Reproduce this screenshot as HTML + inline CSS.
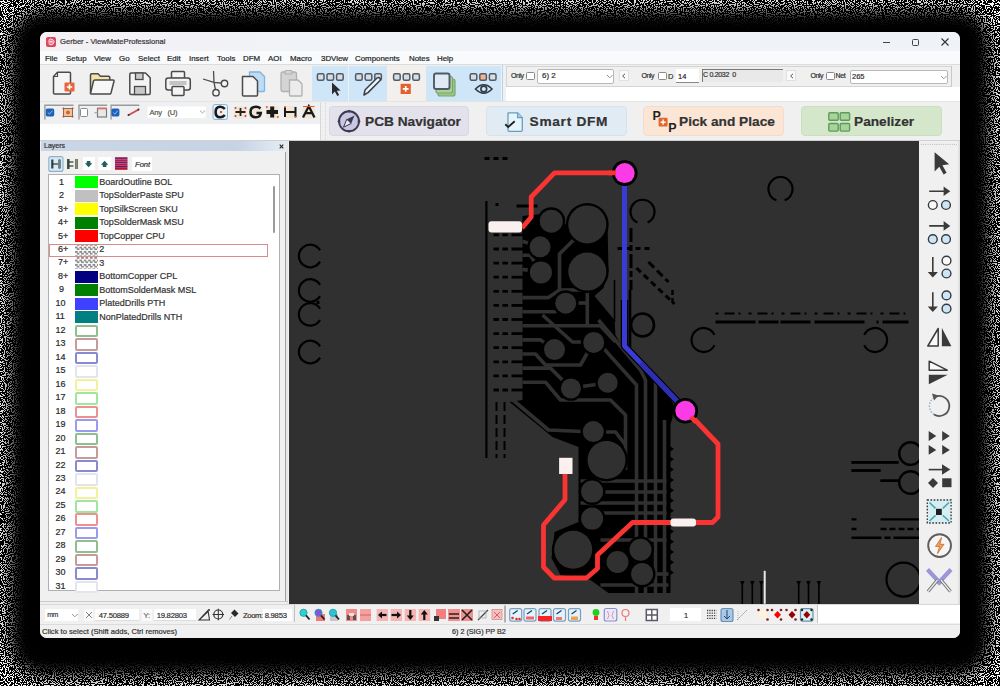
<!DOCTYPE html><html><head><meta charset="utf-8"><style>
html,body{margin:0;padding:0;}
body{width:1000px;height:686px;overflow:hidden;position:relative;background:#000;font-family:"Liberation Sans", sans-serif;}
.t{position:absolute;white-space:nowrap;line-height:1.2;-webkit-text-stroke:0.2px;}
.b{position:absolute;box-sizing:border-box;}
#sh{position:absolute;left:0;top:0;width:1000px;height:686px;}
#win{position:absolute;left:40px;top:32px;width:920px;height:606px;border-radius:7px;overflow:hidden;background:#f0f0f0;}
#in{position:absolute;left:-40px;top:-32px;width:1000px;height:686px;}
svg{position:absolute;overflow:visible;}
</style></head><body>
<svg style="left:0;top:0" width="1000" height="686">
<defs>
<filter id="spk" x="0" y="0" width="1000" height="686" filterUnits="userSpaceOnUse" color-interpolation-filters="sRGB">
<feTurbulence type="fractalNoise" baseFrequency="0.9" numOctaves="1" seed="11"/>
<feColorMatrix type="matrix" values="0 0 0 0 1  0 0 0 0 1  0 0 0 0 1  1 0 0 0 -0.035"/>
<feComponentTransfer><feFuncA type="discrete" tableValues="0 1"/></feComponentTransfer>
</filter>
<filter id="bl" x="-5%" y="-5%" width="110%" height="110%"><feGaussianBlur stdDeviation="8.0"/></filter>
<mask id="shm" maskUnits="userSpaceOnUse" x="0" y="0" width="1000" height="686">
<rect x="0" y="0" width="1000" height="686" fill="#fff"/>
<rect x="10" y="10" width="980" height="666" rx="34" fill="#000" filter="url(#bl)"/>
</mask>
</defs>
<rect x="0" y="0" width="1000" height="686" fill="#000"/>
<g mask="url(#shm)"><rect x="0" y="0" width="1000" height="686" fill="#fff" filter="url(#spk)"/></g>
</svg>
<div id="win"><div id="in">
<div class="b" style="left:40px;top:32px;width:920px;height:19px;background:linear-gradient(to right,#f4f0f4,#f0f3f7 30%,#eff3f7);"></div>
<div class="b" style="left:46px;top:37px;width:10px;height:10px;background:#d8475c;border-radius:2px;"></div>
<svg style="left:46px;top:37px" width="10" height="10"><circle cx="5" cy="5" r="3.3" fill="#ee7a8a"/><path d="M2.6 3.6 A2.8 2.8 0 1 1 3 6.8" fill="none" stroke="#fde" stroke-width="1"/><path d="M3.2 4.8 H6.6" stroke="#fff" stroke-width="1"/></svg>
<div class="t" style="left:60px;top:37.4px;font-size:7.6px;color:#333;font-weight:400;">Gerber - ViewMateProfessional</div>
<div class="b" style="left:883px;top:41.5px;width:7px;height:1.2000000000000028px;background:#444;"></div>
<div class="b" style="left:911.5px;top:38.5px;width:7.0px;height:7.0px;border:1.3px solid #444;border-radius:1.5px;"></div>
<svg style="left:941px;top:38px" width="8" height="8"><path d="M0.5 0.5 L7.5 7.5 M7.5 0.5 L0.5 7.5" stroke="#333" stroke-width="1.1"/></svg>
<div class="b" style="left:40px;top:51px;width:920px;height:13px;background:#f9fafb;"></div>
<div class="t" style="left:45px;top:53.8px;font-size:7.9px;color:#1e1e1e;font-weight:400;">File</div>
<div class="t" style="left:66px;top:53.8px;font-size:7.9px;color:#1e1e1e;font-weight:400;">Setup</div>
<div class="t" style="left:94px;top:53.8px;font-size:7.9px;color:#1e1e1e;font-weight:400;">View</div>
<div class="t" style="left:119px;top:53.8px;font-size:7.9px;color:#1e1e1e;font-weight:400;">Go</div>
<div class="t" style="left:138px;top:53.8px;font-size:7.9px;color:#1e1e1e;font-weight:400;">Select</div>
<div class="t" style="left:167px;top:53.8px;font-size:7.9px;color:#1e1e1e;font-weight:400;">Edit</div>
<div class="t" style="left:189px;top:53.8px;font-size:7.9px;color:#1e1e1e;font-weight:400;">Insert</div>
<div class="t" style="left:217px;top:53.8px;font-size:7.9px;color:#1e1e1e;font-weight:400;">Tools</div>
<div class="t" style="left:243px;top:53.8px;font-size:7.9px;color:#1e1e1e;font-weight:400;">DFM</div>
<div class="t" style="left:268px;top:53.8px;font-size:7.9px;color:#1e1e1e;font-weight:400;">AOI</div>
<div class="t" style="left:290px;top:53.8px;font-size:7.9px;color:#1e1e1e;font-weight:400;">Macro</div>
<div class="t" style="left:321px;top:53.8px;font-size:7.9px;color:#1e1e1e;font-weight:400;">3DView</div>
<div class="t" style="left:355px;top:53.8px;font-size:7.9px;color:#1e1e1e;font-weight:400;">Components</div>
<div class="t" style="left:409px;top:53.8px;font-size:7.9px;color:#1e1e1e;font-weight:400;">Notes</div>
<div class="t" style="left:437px;top:53.8px;font-size:7.9px;color:#1e1e1e;font-weight:400;">Help</div>
<div class="b" style="left:40px;top:64px;width:920px;height:1px;background:#dcdcdc;"></div>
<div class="b" style="left:40px;top:65px;width:920px;height:36px;background:#f0f0f0;"></div>
<div class="b" style="left:40px;top:101px;width:920px;height:1px;background:#e4e4e4;"></div>
<div class="b" style="left:40px;top:102px;width:285px;height:22px;background:#eef0f2;"></div>
<div class="b" style="left:40px;top:124px;width:281px;height:16px;background:#fff;"></div>
<div class="b" style="left:320px;top:102px;width:1px;height:38px;background:#d8d8d8;"></div>
<div class="b" style="left:325px;top:102px;width:635px;height:38px;background:#f0f0f0;"></div>
<div class="b" style="left:40px;top:140px;width:920px;height:1px;background:#d0d0d0;"></div>
<div class="b" style="left:311.8px;top:65.5px;width:36.599999999999966px;height:35px;background:#cfe5f8;"></div>
<div class="b" style="left:348.8px;top:65.5px;width:38.0px;height:35px;background:#cfe5f8;"></div>
<div class="b" style="left:387px;top:65.5px;width:38px;height:35px;background:#f3efec;"></div>
<div class="b" style="left:425.5px;top:65.5px;width:37.5px;height:35px;background:#cfe5f8;"></div>
<div class="b" style="left:463.4px;top:65.5px;width:37.60000000000002px;height:35px;background:#cfe5f8;"></div>
<svg style="left:40px;top:64px" width="470" height="40" viewBox="40 64 470 40"><path d="M57.5 72.2 H69.5 Q70.5 72.2 70.5 73.2 V93 Q70.5 94 69.5 94 H54.5 Q53.5 94 53.5 93 V76.5 Z" fill="#f4f4f4" stroke="#4a4a4a" stroke-width="1.5" stroke-linejoin="round"/><path d="M57.5 72.2 V76.5 H53.5" fill="none" stroke="#4a4a4a" stroke-width="1.2"/><rect x="64.5" y="82.4" width="10" height="9" rx="1" fill="#e8643c"/><path d="M69.5 84.3 V89.6 M66.8 87 H72.2" stroke="#fff" stroke-width="1.6"/><path d="M90.5 93.5 V75 Q90.5 73.8 91.7 73.8 H98 L100.5 76.3 H108.5 Q109.8 76.3 109.8 77.5 V80" fill="#f3e3a8" stroke="#4a4a4a" stroke-width="1.5" stroke-linejoin="round"/><path d="M90.5 93.5 L93.5 81 Q93.8 80 94.8 80 H113 Q114.3 80 114 81.2 L111 93 Q110.7 94 109.7 94 H91 Z" fill="#f7f7f7" stroke="#4a4a4a" stroke-width="1.5" stroke-linejoin="round"/><path d="M131 73 H145.5 L150.2 77.7 V93.2 Q150.2 94.4 149 94.4 H131 Q129.8 94.4 129.8 93.2 V74.2 Q129.8 73 131 73 Z" fill="#f4f4f4" stroke="#4a4a4a" stroke-width="1.5" stroke-linejoin="round"/><rect x="135.5" y="73" width="7.5" height="6.5" fill="#c8c8c8" stroke="#4a4a4a" stroke-width="1.3"/><rect x="134.5" y="86.5" width="11" height="8" fill="#c8c8c8" stroke="#4a4a4a" stroke-width="1.3"/><rect x="171.5" y="71.5" width="13" height="7" rx="1" fill="#f4f4f4" stroke="#4a4a4a" stroke-width="1.5"/><rect x="165.8" y="78" width="24.5" height="12" rx="2.5" fill="#f4f4f4" stroke="#4a4a4a" stroke-width="1.5"/><rect x="169.5" y="81" width="17" height="4" fill="#c4c4c4"/><rect x="172" y="86.5" width="12" height="9" rx="1" fill="#f4f4f4" stroke="#4a4a4a" stroke-width="1.5"/><path d="M203 79 L214 82.3 L225 83.5 M213.5 71 L214 82.3 L216 92.5" fill="none" stroke="#4a4a4a" stroke-width="1.3"/><circle cx="224.5" cy="83.5" r="3.2" fill="#f4f4f4" stroke="#4a4a4a" stroke-width="1.4"/><circle cx="216" cy="92.7" r="3.2" fill="#f4f4f4" stroke="#4a4a4a" stroke-width="1.4"/><path d="M249.5 72 H260 L264.5 76.5 V90.5 Q264.5 91.5 263.5 91.5 H250.5 Q249.5 91.5 249.5 90.5 Z" fill="#bfdcf5" stroke="#7fb3e0" stroke-width="1.3" stroke-linejoin="round"/><path d="M242.5 76.5 H253 L257.5 81 V95 Q257.5 96 256.5 96 H243.5 Q242.5 96 242.5 95 Z" fill="#f4f4f4" stroke="#4a4a4a" stroke-width="1.5" stroke-linejoin="round"/><rect x="281" y="72" width="15.5" height="19.5" rx="2" fill="#d4d4d4" stroke="#b0b0b0" stroke-width="1.3"/><rect x="285" y="70.5" width="7" height="3.5" rx="1" fill="#d4d4d4" stroke="#b0b0b0" stroke-width="1.2"/><path d="M289.5 80 H298 L302 84 V95 Q302 96 301 96 H290.5 Q289.5 96 289.5 95 Z" fill="#ececec" stroke="#b0b0b0" stroke-width="1.3"/><rect x="317.4" y="73.8" width="6.6" height="6.4" rx="1.5" fill="#d8dde2" stroke="#505a66" stroke-width="1.5"/><rect x="327.0" y="73.8" width="6.6" height="6.4" rx="1.5" fill="#d8dde2" stroke="#505a66" stroke-width="1.5"/><rect x="336.59999999999997" y="73.8" width="6.6" height="6.4" rx="1.5" fill="#d8dde2" stroke="#505a66" stroke-width="1.5"/><path d="M332 82.6 L332 94.5 L334.8 91.6 L337.3 96 L339.2 95 L336.8 90.8 L340.6 90.5 Z" fill="#2a2a2a"/><rect x="355.6" y="73.8" width="6.6" height="6.4" rx="1.5" fill="#d8dde2" stroke="#505a66" stroke-width="1.5"/><rect x="365.20000000000005" y="73.8" width="6.6" height="6.4" rx="1.5" fill="#d8dde2" stroke="#505a66" stroke-width="1.5"/><rect x="374.8" y="73.8" width="6.6" height="6.4" rx="1.5" fill="#d8dde2" stroke="#505a66" stroke-width="1.5"/><path d="M364 95 L365 90 L377 78 Q378.5 76.8 379.8 78.1 Q381 79.4 379.8 80.8 L368 92.6 Z" fill="#eef5fb" stroke="#3a3f46" stroke-width="1.5" stroke-linejoin="round"/><rect x="393.6" y="73.8" width="6.6" height="6.4" rx="1.5" fill="#d8dde2" stroke="#505a66" stroke-width="1.5"/><rect x="403.20000000000005" y="73.8" width="6.6" height="6.4" rx="1.5" fill="#d8dde2" stroke="#505a66" stroke-width="1.5"/><rect x="412.8" y="73.8" width="6.6" height="6.4" rx="1.5" fill="#d8dde2" stroke="#505a66" stroke-width="1.5"/><rect x="400.6" y="83.8" width="10.2" height="10.2" fill="#e3602e"/><path d="M405.7 86 V91.8 M402.8 88.9 H408.6" stroke="#fff" stroke-width="1.7"/><rect x="438" y="79" width="17" height="17" rx="2" fill="#9cc68a" stroke="#78a868" stroke-width="1.2"/><rect x="436" y="76.5" width="16.5" height="16.5" rx="2" fill="#a9d098" stroke="#78a868" stroke-width="1.2"/><rect x="434" y="73.5" width="15.5" height="15.5" rx="2" fill="#dfeaf4" stroke="#4f5a66" stroke-width="1.9"/><rect x="470.2" y="73.8" width="6.6" height="6.4" rx="1.5" fill="#d8dde2" stroke="#505a66" stroke-width="1.5"/><rect x="479.8" y="73.8" width="6.6" height="6.4" rx="1.5" fill="#f2b48a" stroke="#505a66" stroke-width="1.5"/><rect x="489.4" y="73.8" width="6.6" height="6.4" rx="1.5" fill="#d8dde2" stroke="#505a66" stroke-width="1.5"/><path d="M475.5 89 Q483.8 80.5 492 89 Q483.8 97.5 475.5 89 Z" fill="none" stroke="#2f3a44" stroke-width="1.6"/><circle cx="483.8" cy="89" r="2.9" fill="none" stroke="#2f3a44" stroke-width="1.6"/></svg>
<svg style="left:40px;top:100px" width="290" height="28" viewBox="40 100 290 28"><path d="M44.900000000000006 119.4 V105.2 H73.6" fill="none" stroke="#9a9a9a" stroke-width="1.4"/><path d="M79.0 119.4 V105.2 H107.2" fill="none" stroke="#9a9a9a" stroke-width="1.4"/><path d="M111.10000000000001 119.4 V105.2 H139.3" fill="none" stroke="#9a9a9a" stroke-width="1.4"/><rect x="45.8" y="108.4" width="8.4" height="8" rx="1.6" fill="#1d62b8"/><path d="M47.8 112.5 L49.5 114.2 L52.4 110.6" fill="none" stroke="#9cc4f0" stroke-width="0.9"/><rect x="63.5" y="108.5" width="9" height="8" rx="1" fill="#e9c79a" stroke="#8a6a48" stroke-width="1"/><circle cx="68" cy="112.5" r="2" fill="#e06030"/><circle cx="63.5" cy="108.5" r="1" fill="#c33"/><circle cx="72.5" cy="108.5" r="1" fill="#c33"/><circle cx="63.5" cy="116.5" r="1" fill="#c33"/><circle cx="72.5" cy="116.5" r="1" fill="#c33"/><rect x="80.5" y="108.5" width="7" height="8" rx="1" fill="#fff" stroke="#8a8a8a" stroke-width="1"/><rect x="97.5" y="108.5" width="9" height="8.5" fill="#e8e8e8" stroke="#7a7a7a" stroke-width="1.2"/><rect x="97.5" y="107.5" width="9" height="1.8" fill="#e07070"/><rect x="94.5" y="112" width="3" height="1.4" fill="#aaa"/><rect x="111.4" y="108.4" width="8" height="8" rx="1.6" fill="#1d62b8"/><path d="M113.3 112.5 L115 114.2 L117.7 110.6" fill="none" stroke="#9cc4f0" stroke-width="0.9"/><path d="M128.3 115.2 L138.7 109.5" stroke="#d04848" stroke-width="1.8"/><circle cx="128.5" cy="115" r="1" fill="#333"/><circle cx="138.5" cy="109.6" r="1" fill="#333"/><rect x="147.6" y="106.5" width="58" height="11.5" fill="#fff"/><path d="M200 110.6 L202.5 113 L205 110.6" fill="none" stroke="#999" stroke-width="0.9"/><rect x="213" y="104.5" width="14.5" height="15" rx="2" fill="#eaf2fa" stroke="#8db4d8" stroke-width="1"/><path d="M224.8 109 Q223 106.8 220.2 106.8 Q215.6 106.8 215.6 112 Q215.6 117.3 220.2 117.3 Q223 117.3 224.8 115" fill="none" stroke="#1a1a1a" stroke-width="2.6"/><circle cx="221" cy="112" r="1.2" fill="#e05a20"/><rect x="234" y="106" width="12.5" height="12.5" rx="2" fill="#f4e4cc" opacity="0.8"/><rect x="249" y="106" width="12.5" height="12.5" rx="2" fill="#f4e4cc" opacity="0.8"/><rect x="266" y="106" width="12.5" height="12.5" rx="2" fill="#f4e4cc" opacity="0.8"/><rect x="284.4" y="106" width="12.5" height="12.5" rx="2" fill="#f4e4cc" opacity="0.8"/><rect x="302.5" y="106" width="12.5" height="12.5" rx="2" fill="#f4e4cc" opacity="0.8"/><path d="M235.5 112 H245.5 M240.5 108 V116" stroke="#222" stroke-width="1.8"/><circle cx="235.5" cy="108" r="1" fill="#d33"/><circle cx="245.5" cy="108" r="1" fill="#d33"/><circle cx="235.5" cy="116" r="1" fill="#d33"/><circle cx="245.5" cy="116" r="1" fill="#d33"/><path d="M260.5 108.5 Q258.8 106.8 256 106.8 Q250.5 106.8 250.5 112 Q250.5 117.3 256 117.3 Q260.5 117.3 260.8 113 H256.5" fill="none" stroke="#1a1a1a" stroke-width="2.5"/><path d="M266.5 112 H278 M272.2 106.5 V117.5" stroke="#1a1a1a" stroke-width="4"/><circle cx="266.8" cy="107" r="1" fill="#e06020"/><circle cx="277.8" cy="117" r="1" fill="#e06020"/><path d="M285 107 V117 M295.5 107 V117 M285 112 H295.5" stroke="#1a1a1a" stroke-width="2"/><circle cx="285" cy="107" r="1" fill="#e06020"/><circle cx="295.5" cy="117" r="1" fill="#e06020"/><path d="M303 117.5 L308.8 106.2 L314.5 117.5 M305.3 113.2 H312.3" fill="none" stroke="#1a1a1a" stroke-width="2.3"/><path d="M303 106.5 H314.5" stroke="#e06020" stroke-width="1"/></svg>
<div class="t" style="left:149.5px;top:108.0px;font-size:7.5px;color:#555;font-weight:400;letter-spacing:-0.2px;">Any&nbsp;&nbsp;&nbsp;(U)</div>
<div class="b" style="left:325px;top:103px;width:0;height:37px;border-left:1px dotted #d4d4d4;"></div>
<div class="b" style="left:501.5px;top:65px;width:1.6px;height:36px;background:#b4d4f0;"></div>
<div class="b" style="left:505.5px;top:66px;width:446px;height:20.5px;background:#f0f0f0;border:1px solid #d4d4d4;border-right-color:#c8c8c8;"></div>
<div class="b" style="left:505.5px;top:86.5px;width:455px;height:14.5px;background:#fff;"></div>
<div class="t" style="left:511px;top:71.7px;font-size:7px;color:#333;font-weight:400;letter-spacing:-0.5px;">Only</div>
<div class="b" style="left:526px;top:71.8px;width:8.5px;height:8px;border:1px solid #8a8a8a;border-radius:1.5px;background:#fff;"></div>
<div class="b" style="left:536.8px;top:68.5px;width:77.6px;height:15px;background:#fff;border:1px solid #b8b8b8;border-radius:2px;"></div>
<div class="t" style="left:542px;top:71.4px;font-size:8px;color:#333;font-weight:400;">6) 2</div>
<svg style="left:606px;top:74px" width="8" height="5"><path d="M1 1 L3.8 3.8 L6.6 1" fill="none" stroke="#888" stroke-width="0.9"/></svg>
<div class="b" style="left:618.5px;top:70px;width:10px;height:11px;background:#fafafa;border:1px solid #e0e0e0;"></div>
<svg style="left:620px;top:72px" width="8" height="8"><path d="M5 1.8 L2.6 4 L5 6.2" fill="none" stroke="#555" stroke-width="1"/></svg>
<div class="t" style="left:641.5px;top:71.7px;font-size:7px;color:#333;font-weight:400;letter-spacing:-0.5px;">Only</div>
<div class="b" style="left:658px;top:71.8px;width:8.5px;height:8px;border:1px solid #8a8a8a;border-radius:1.5px;background:#fff;"></div>
<div class="t" style="left:668px;top:71.5px;font-size:7.5px;color:#333;font-weight:400;">D</div>
<div class="b" style="left:676px;top:69px;width:23px;height:13.5px;background:#fff;border-bottom:1px solid #888;"></div>
<div class="t" style="left:678px;top:71.5px;font-size:7.5px;color:#222;font-weight:400;">14</div>
<div class="b" style="left:701.5px;top:68.5px;width:81.5px;height:13px;background:#e9e9e9;border-top:1.5px solid #777;border-left:1px solid #777;"></div>
<div class="t" style="left:703px;top:71.3px;font-size:7px;color:#333;font-weight:400;letter-spacing:-0.3px;">C 0.2032&nbsp; 0</div>
<div class="b" style="left:786px;top:70px;width:10px;height:11px;background:#fafafa;border:1px solid #e0e0e0;"></div>
<svg style="left:787.5px;top:72px" width="8" height="8"><path d="M5 1.8 L2.6 4 L5 6.2" fill="none" stroke="#555" stroke-width="1"/></svg>
<div class="t" style="left:810.5px;top:71.7px;font-size:7px;color:#333;font-weight:400;letter-spacing:-0.5px;">Only</div>
<div class="b" style="left:826px;top:71.8px;width:8.5px;height:8px;border:1px solid #8a8a8a;border-radius:1.5px;background:#fff;"></div>
<div class="t" style="left:835.5px;top:71.8px;font-size:7px;color:#333;font-weight:400;letter-spacing:-0.3px;">Net</div>
<div class="b" style="left:849.5px;top:70px;width:98.5px;height:14px;background:#fff;border:1px solid #b8b8b8;border-radius:2px;"></div>
<div class="t" style="left:852px;top:72.1px;font-size:7.5px;color:#333;font-weight:400;">265</div>
<svg style="left:940px;top:75px" width="8" height="5"><path d="M1 1 L3.8 3.8 L6.6 1" fill="none" stroke="#888" stroke-width="0.9"/></svg>
<div class="b" style="left:328.5px;top:106.4px;width:140.5px;height:30px;background:#e3e1eb;border-radius:4px;border:1px solid #d9d7e2;"></div>
<div class="t" style="left:365px;top:113.6px;font-size:13.7px;color:#333;font-weight:700;">PCB Navigator</div>
<div class="b" style="left:486px;top:106.4px;width:141px;height:30px;background:#e0ebf4;border-radius:4px;border:1px solid #d6e2ec;"></div>
<div class="t" style="left:529.6px;top:113.6px;font-size:13.7px;color:#333;font-weight:700;letter-spacing:0.7px;">Smart DFM</div>
<div class="b" style="left:643px;top:106.4px;width:140.5px;height:30px;background:#fbe5d5;border-radius:4px;border:1px solid #f1dccd;"></div>
<div class="t" style="left:679px;top:113.6px;font-size:13.7px;color:#333;font-weight:700;">Pick and Place</div>
<div class="b" style="left:800.5px;top:106.4px;width:141.5px;height:30px;background:#d5e7cb;border-radius:4px;border:1px solid #cadfbf;"></div>
<div class="t" style="left:854px;top:113.6px;font-size:13.7px;color:#333;font-weight:700;">Panelizer</div>
<svg style="left:320px;top:100px" width="640" height="40" viewBox="320 100 640 40"><circle cx="349" cy="121.3" r="10" fill="#c9c6e6" stroke="#3b3b4c" stroke-width="1.9"/><path d="M354.5 115.5 L351.2 123.5 L343.5 127.2 L346.8 119.2 Z" fill="#3b3b4c"/><path d="M346.8 119.2 L343.5 127.2 L351.2 123.5 Z" fill="#fff" opacity="0.9"/><path d="M346.8 119.2 L351.2 123.5 L343.5 127.2 Z" fill="none" stroke="#3b3b4c" stroke-width="1"/><circle cx="359.0" cy="121.3" r="1.3" fill="#3b3b4c"/><circle cx="349.0" cy="131.3" r="1.3" fill="#3b3b4c"/><circle cx="339.0" cy="121.3" r="1.3" fill="#3b3b4c"/><circle cx="349.0" cy="111.3" r="1.3" fill="#3b3b4c"/><path d="M508 112.8 H517.5 L522.3 117.6 V130 Q522.3 131.3 521 131.3 H509.3 Q508 131.3 508 130 V114.1 Q508 112.8 509.3 112.8 Z" fill="#e6f5fc" stroke="#6b9cbc" stroke-width="1.3" stroke-linejoin="round"/><path d="M517.5 112.8 V117.6 H522.3" fill="#9fd0ee" stroke="#6b9cbc" stroke-width="1.1"/><path d="M505.3 124.3 L508.2 127 L514.7 121.3" fill="none" stroke="#222" stroke-width="1.9"/><text x="652.5" y="120.3" font-family="Liberation Sans" font-weight="700" font-size="12.5" fill="#222">P</text><rect x="658.6" y="117.8" width="9" height="8.7" rx="1" fill="#e0682e"/><path d="M663.1 119.6 V124.7 M660.6 122.2 H665.6" stroke="#fff" stroke-width="1.4"/><text x="668.3" y="132.3" font-family="Liberation Sans" font-weight="700" font-size="12.5" fill="#222">P</text><rect x="828.8000000000001" y="112.69999999999999" width="9.4" height="7.6" rx="1" fill="#a8d39b" stroke="#5f9a5c" stroke-width="1.4"/><rect x="828.8000000000001" y="123.5" width="9.4" height="7.6" rx="1" fill="#a8d39b" stroke="#5f9a5c" stroke-width="1.4"/><rect x="840.2" y="112.69999999999999" width="9.4" height="7.6" rx="1" fill="#a8d39b" stroke="#5f9a5c" stroke-width="1.4"/><rect x="840.2" y="123.5" width="9.4" height="7.6" rx="1" fill="#a8d39b" stroke="#5f9a5c" stroke-width="1.4"/></svg>
<div class="b" style="left:288.5px;top:141px;width:630.5px;height:462.5px;background:#303030;"></div>
<div class="b" style="left:288.5px;top:141px;width:630.5px;height:462.5px;overflow:hidden;">
<svg width="630.5" height="462.5" viewBox="288.5 141 630.5 462.5" style="left:0;top:0">
<path d="M319.5 261.6 A11.3 11.3 0 1 1 319.5 250.3" fill="none" stroke="#000" stroke-width="2.2"/>
<path d="M319.5 296.1 A11.3 11.3 0 1 1 319.5 284.9" fill="none" stroke="#000" stroke-width="2.2"/>
<path d="M319.5 320.0 A11.3 11.3 0 1 1 319.5 308.8" fill="none" stroke="#000" stroke-width="2.2"/>
<path d="M319.5 357.6 A11.3 11.3 0 1 1 319.5 346.4" fill="none" stroke="#000" stroke-width="2.2"/>
<rect x="316" y="301" width="3" height="3" fill="#000"/>
<rect x="484" y="157" width="5" height="3" fill="#000"/>
<rect x="493" y="157" width="5" height="3" fill="#000"/>
<rect x="502" y="157" width="5" height="3" fill="#000"/>
<polygon points="522,216 541,214 551,225 568,224 586,226 604,222 607,225 608,270 603,288 594,296 614,320 615,335 622,347 668,396 673,404 672,418 670,424 670,593 608,593 590,580 560,575 551,558 554,532 578,522 578,447 552,437 509,402 522,400" fill="#000"/>
<rect x="484.8" y="201" width="2.2" height="257" fill="#000"/>
<line x1="493" y1="234.9" x2="512" y2="234.9" stroke="#000" stroke-width="2.8" stroke-dasharray="5.4 3.6"/><line x1="511.6" y1="234.9" x2="523" y2="234.9" stroke="#000" stroke-width="2.8"/>
<line x1="493" y1="249.0" x2="512" y2="249.0" stroke="#000" stroke-width="2.8" stroke-dasharray="5.4 3.6"/><line x1="511.6" y1="249.0" x2="523" y2="249.0" stroke="#000" stroke-width="2.8"/>
<line x1="493" y1="263.1" x2="512" y2="263.1" stroke="#000" stroke-width="2.8" stroke-dasharray="5.4 3.6"/><line x1="511.6" y1="263.1" x2="523" y2="263.1" stroke="#000" stroke-width="2.8"/>
<line x1="493" y1="277.2" x2="512" y2="277.2" stroke="#000" stroke-width="2.8" stroke-dasharray="5.4 3.6"/><line x1="511.6" y1="277.2" x2="523" y2="277.2" stroke="#000" stroke-width="2.8"/>
<line x1="493" y1="291.3" x2="512" y2="291.3" stroke="#000" stroke-width="2.8" stroke-dasharray="5.4 3.6"/><line x1="511.6" y1="291.3" x2="523" y2="291.3" stroke="#000" stroke-width="2.8"/>
<line x1="493" y1="305.4" x2="512" y2="305.4" stroke="#000" stroke-width="2.8" stroke-dasharray="5.4 3.6"/><line x1="511.6" y1="305.4" x2="523" y2="305.4" stroke="#000" stroke-width="2.8"/>
<line x1="493" y1="319.5" x2="512" y2="319.5" stroke="#000" stroke-width="2.8" stroke-dasharray="5.4 3.6"/><line x1="511.6" y1="319.5" x2="523" y2="319.5" stroke="#000" stroke-width="2.8"/>
<line x1="493" y1="333.6" x2="512" y2="333.6" stroke="#000" stroke-width="2.8" stroke-dasharray="5.4 3.6"/><line x1="511.6" y1="333.6" x2="523" y2="333.6" stroke="#000" stroke-width="2.8"/>
<line x1="493" y1="347.7" x2="512" y2="347.7" stroke="#000" stroke-width="2.8" stroke-dasharray="5.4 3.6"/><line x1="511.6" y1="347.7" x2="523" y2="347.7" stroke="#000" stroke-width="2.8"/>
<line x1="493" y1="361.8" x2="512" y2="361.8" stroke="#000" stroke-width="2.8" stroke-dasharray="5.4 3.6"/><line x1="511.6" y1="361.8" x2="523" y2="361.8" stroke="#000" stroke-width="2.8"/>
<line x1="493" y1="375.9" x2="512" y2="375.9" stroke="#000" stroke-width="2.8" stroke-dasharray="5.4 3.6"/><line x1="511.6" y1="375.9" x2="523" y2="375.9" stroke="#000" stroke-width="2.8"/>
<line x1="493" y1="390.0" x2="512" y2="390.0" stroke="#000" stroke-width="2.8" stroke-dasharray="5.4 3.6"/><line x1="511.6" y1="390.0" x2="523" y2="390.0" stroke="#000" stroke-width="2.8"/>
<line x1="496" y1="402" x2="496" y2="458" stroke="#000" stroke-width="2" stroke-dasharray="9 4"/>
<line x1="504" y1="402" x2="504" y2="458" stroke="#000" stroke-width="2" stroke-dasharray="9 4"/>
<rect x="495" y="203" width="3" height="3" fill="#000"/><rect x="516" y="204.5" width="21" height="3" fill="#000"/>
<polyline points="522,241.2 539,247" fill="none" stroke="#303030" stroke-width="3.6" stroke-linejoin="round"/>
<polyline points="522,255.3 530,255.3 540,272" fill="none" stroke="#303030" stroke-width="3.6" stroke-linejoin="round"/>
<polyline points="522,269.4 540,272" fill="none" stroke="#303030" stroke-width="3.6" stroke-linejoin="round"/>
<polyline points="559,290 559,254 575,238" fill="none" stroke="#303030" stroke-width="3.6" stroke-linejoin="round"/>
<polyline points="522,297.6 548,297.6 559,290" fill="none" stroke="#303030" stroke-width="3.6" stroke-linejoin="round"/>
<polyline points="522,311.7 555,311.7 565,303" fill="none" stroke="#303030" stroke-width="3.6" stroke-linejoin="round"/>
<polyline points="522,325.8 600,325.8 615,342" fill="none" stroke="#303030" stroke-width="3.6" stroke-linejoin="round"/>
<polyline points="522,339.9 540,339.9 554,350" fill="none" stroke="#303030" stroke-width="3.6" stroke-linejoin="round"/>
<polyline points="522,354 535,354 545,365 580,365 593,342" fill="none" stroke="#303030" stroke-width="3.6" stroke-linejoin="round"/>
<polyline points="542,315 572,342 593,342" fill="none" stroke="#303030" stroke-width="3.6" stroke-linejoin="round"/>
<polyline points="559,290 586,290" fill="none" stroke="#303030" stroke-width="3.6" stroke-linejoin="round"/>
<polyline points="565,303 586,303" fill="none" stroke="#303030" stroke-width="3.6" stroke-linejoin="round"/>
<polyline points="586.8,290 586.8,326" fill="none" stroke="#303030" stroke-width="3.6" stroke-linejoin="round"/>
<polyline points="606,300 640,345 655,360 655,593" fill="none" stroke="#303030" stroke-width="3.6" stroke-linejoin="round"/>
<polyline points="598,320 640,370 645,380 645,593" fill="none" stroke="#303030" stroke-width="3.6" stroke-linejoin="round"/>
<polyline points="600,345 636,385 636,593" fill="none" stroke="#303030" stroke-width="3.6" stroke-linejoin="round"/>
<polyline points="522,368.1 550,368.1 570,388" fill="none" stroke="#303030" stroke-width="3.6" stroke-linejoin="round"/>
<polyline points="570,388 607,383" fill="none" stroke="#303030" stroke-width="3.6" stroke-linejoin="round"/>
<polyline points="522,382.2 545,382.2 560,400 610,400 625,415 625,470" fill="none" stroke="#303030" stroke-width="3.6" stroke-linejoin="round"/>
<polyline points="510,398 548,430 593,432" fill="none" stroke="#303030" stroke-width="3.6" stroke-linejoin="round"/>
<polyline points="593,432 615,432 625,445" fill="none" stroke="#303030" stroke-width="3.6" stroke-linejoin="round"/>
<polyline points="580,481 666,481" fill="none" stroke="#303030" stroke-width="3.6" stroke-linejoin="round"/>
<polyline points="580,492 666,492" fill="none" stroke="#303030" stroke-width="3.6" stroke-linejoin="round"/>
<polyline points="580,503 666,503" fill="none" stroke="#303030" stroke-width="3.6" stroke-linejoin="round"/>
<polyline points="580,513 666,513" fill="none" stroke="#303030" stroke-width="3.6" stroke-linejoin="round"/>
<polyline points="600,540 666,540" fill="none" stroke="#303030" stroke-width="3.6" stroke-linejoin="round"/>
<polyline points="606,478 606,440" fill="none" stroke="#303030" stroke-width="3.6" stroke-linejoin="round"/>
<polyline points="591,491 591,519" fill="none" stroke="#303030" stroke-width="3.6" stroke-linejoin="round"/>
<polyline points="617,562 640,550" fill="none" stroke="#303030" stroke-width="3.6" stroke-linejoin="round"/>
<polyline points="641,574 668,574" fill="none" stroke="#303030" stroke-width="3.6" stroke-linejoin="round"/>
<polyline points="664,420 664,593" fill="none" stroke="#303030" stroke-width="3.6" stroke-linejoin="round"/>
<polyline points="600,585 668,585" fill="none" stroke="#303030" stroke-width="3.6" stroke-linejoin="round"/>
<circle cx="550.8" cy="221.2" r="13.9" fill="#000"/>
<circle cx="586.8" cy="224.4" r="21.4" fill="#000"/>
<circle cx="539.6" cy="246.8" r="12.9" fill="#000"/>
<circle cx="540.4" cy="272.4" r="13.4" fill="#000"/>
<circle cx="586.8" cy="271.6" r="21.4" fill="#000"/>
<circle cx="565.2" cy="303.2" r="12.9" fill="#000"/>
<circle cx="593.2" cy="342.4" r="12.9" fill="#000"/>
<circle cx="554" cy="349.6" r="12.9" fill="#000"/>
<circle cx="570.4" cy="388.4" r="12.4" fill="#000"/>
<circle cx="607.2" cy="382.8" r="12.4" fill="#000"/>
<circle cx="592.8" cy="431.6" r="12.9" fill="#000"/>
<circle cx="606" cy="460" r="21.4" fill="#000"/>
<circle cx="591.6" cy="491.6" r="13.4" fill="#000"/>
<circle cx="591.6" cy="518.6" r="13.4" fill="#000"/>
<circle cx="572.7" cy="549.7" r="21.4" fill="#000"/>
<circle cx="617" cy="562" r="13.4" fill="#000"/>
<circle cx="640" cy="549.7" r="13.4" fill="#000"/>
<circle cx="641.6" cy="574" r="13.4" fill="#000"/>
<circle cx="550.8" cy="221.2" r="11.5" fill="#303030"/>
<circle cx="586.8" cy="224.4" r="19" fill="#303030"/>
<circle cx="539.6" cy="246.8" r="10.5" fill="#303030"/>
<circle cx="540.4" cy="272.4" r="11" fill="#303030"/>
<circle cx="586.8" cy="271.6" r="19" fill="#303030"/>
<circle cx="565.2" cy="303.2" r="10.5" fill="#303030"/>
<circle cx="593.2" cy="342.4" r="10.5" fill="#303030"/>
<circle cx="554" cy="349.6" r="10.5" fill="#303030"/>
<circle cx="570.4" cy="388.4" r="10" fill="#303030"/>
<circle cx="607.2" cy="382.8" r="10" fill="#303030"/>
<circle cx="592.8" cy="431.6" r="10.5" fill="#303030"/>
<circle cx="606" cy="460" r="19" fill="#303030"/>
<circle cx="591.6" cy="491.6" r="11" fill="#303030"/>
<circle cx="591.6" cy="518.6" r="11" fill="#303030"/>
<circle cx="572.7" cy="549.7" r="19" fill="#303030"/>
<circle cx="617" cy="562" r="11" fill="#303030"/>
<circle cx="640" cy="549.7" r="11" fill="#303030"/>
<circle cx="641.6" cy="574" r="11" fill="#303030"/>
<path d="M669 446.0 L673.5 449.0 L669 452.0 Z" fill="#000"/>
<path d="M669 456.3 L673.5 459.3 L669 462.3 Z" fill="#000"/>
<path d="M669 466.6 L673.5 469.6 L669 472.6 Z" fill="#000"/>
<path d="M669 476.9 L673.5 479.9 L669 482.9 Z" fill="#000"/>
<path d="M669 487.2 L673.5 490.2 L669 493.2 Z" fill="#000"/>
<path d="M669 497.5 L673.5 500.5 L669 503.5 Z" fill="#000"/>
<path d="M669 507.8 L673.5 510.8 L669 513.8 Z" fill="#000"/>
<path d="M669 518.1 L673.5 521.1 L669 524.1 Z" fill="#000"/>
<path d="M669 528.4 L673.5 531.4 L669 534.4 Z" fill="#000"/>
<path d="M669 538.7 L673.5 541.7 L669 544.7 Z" fill="#000"/>
<path d="M669 549.0 L673.5 552.0 L669 555.0 Z" fill="#000"/>
<path d="M669 559.3 L673.5 562.3 L669 565.3 Z" fill="#000"/>
<path d="M669 569.6 L673.5 572.6 L669 575.6 Z" fill="#000"/>
<line x1="630.5" y1="228" x2="630.5" y2="290" stroke="#000" stroke-width="3" stroke-dasharray="14 3 6 3"/>
<line x1="629.5" y1="290" x2="629.5" y2="350" stroke="#000" stroke-width="2.6"/>
<line x1="614" y1="280" x2="614" y2="322" stroke="#000" stroke-width="1.6"/>
<line x1="617" y1="248.5" x2="652" y2="248.5" stroke="#000" stroke-width="3" stroke-dasharray="5 4"/>
<path d="M636.9 222.6 A12 12 0 1 1 647.1 222.6" fill="none" stroke="#000" stroke-width="2.2"/>
<circle cx="642" cy="325" r="11.5" fill="none" stroke="#000" stroke-width="2.6"/>
<path d="M775.9 200.3 A12 12 0 1 1 784.1 200.3" fill="none" stroke="#000" stroke-width="2.2"/>
<path d="M713.9 345.1 A12 12 0 1 1 713.9 334.9" fill="none" stroke="#000" stroke-width="2.2"/>
<path d="M863.7 334.9 A12 12 0 1 1 863.7 345.1" fill="none" stroke="#000" stroke-width="2.2"/>
<line x1="715" y1="313.5" x2="908" y2="313.5" stroke="#000" stroke-width="2.2" stroke-dasharray="3 6 10 4 2 8"/>
<line x1="715" y1="322" x2="908" y2="322" stroke="#000" stroke-width="3" stroke-dasharray="40 3 20 2 30 4 50 12 2 4"/>
<line x1="636" y1="268" x2="674" y2="304" stroke="#000" stroke-width="3" stroke-dasharray="6 4"/>
<line x1="648" y1="262" x2="668" y2="282" stroke="#000" stroke-width="3" stroke-dasharray="8 4"/>
<line x1="672" y1="290" x2="672" y2="304" stroke="#000" stroke-width="2.5" stroke-dasharray="5 3"/>
<path d="M851 462.4 H898" stroke="#000" stroke-width="2.6"/>
<path d="M851 470.5 H880 M880 480.8 H899" stroke="#000" stroke-width="2.4"/>
<path d="M851 466.5 H900" stroke="#303030" stroke-width="5"/>
<circle cx="910" cy="453.6" r="11.3" fill="none" stroke="#000" stroke-width="2.4"/>
<circle cx="910" cy="482.5" r="11.3" fill="none" stroke="#000" stroke-width="2.4"/>
<path d="M851 462.4 H898 M851 470.5 H880 M880 480.8 H899" stroke="#000" stroke-width="2.4"/>
<path d="M851 519.3 H856 M880 519.3 H919" stroke="#000" stroke-width="2.2"/>
<path d="M851 529 H856 M880 529 H919" stroke="#000" stroke-width="2.4" stroke-dasharray="6 3"/>
<path d="M851 537.7 H919" stroke="#000" stroke-width="2.4" stroke-dasharray="30 3 6 3"/>
<circle cx="903" cy="579.6" r="17" fill="none" stroke="#000" stroke-width="2.2"/>
<line x1="741.8" y1="583" x2="741.8" y2="604" stroke="#000" stroke-width="1.6"/><path d="M739.5 581 H744.0999999999999 L741.8 586 Z" fill="#000"/>
<line x1="751.8" y1="583" x2="751.8" y2="604" stroke="#000" stroke-width="1.6"/><path d="M749.5 581 H754.0999999999999 L751.8 586 Z" fill="#000"/>
<line x1="760.8" y1="583" x2="760.8" y2="604" stroke="#000" stroke-width="1.6"/><path d="M758.5 581 H763.0999999999999 L760.8 586 Z" fill="#000"/>
<line x1="798.2" y1="583" x2="798.2" y2="604" stroke="#000" stroke-width="1.6"/><path d="M795.9000000000001 581 H800.5 L798.2 586 Z" fill="#000"/>
<line x1="808" y1="583" x2="808" y2="604" stroke="#000" stroke-width="1.6"/><path d="M805.7 581 H810.3 L808 586 Z" fill="#000"/>
<line x1="818.4" y1="583" x2="818.4" y2="604" stroke="#000" stroke-width="1.6"/><path d="M816.1 581 H820.6999999999999 L818.4 586 Z" fill="#000"/>
<rect x="763.2" y="570.8" width="2" height="33" fill="#e8e8e8"/>
<polyline points="521.5,228 530.7,217 530.7,197 554,172.8 623,172.8" fill="none" stroke="#fa3333" stroke-width="4.8" stroke-linejoin="round"/>
<polyline points="685,410 717.5,444 717.5,517 712,522.5 632,522.5 597,555 597,568.5 586,578 553.7,578 543,567 543,525 564.5,499.7 564.5,474" fill="none" stroke="#fa3333" stroke-width="4.8" stroke-linejoin="round"/>
<polyline points="624,300 624,346 685,410" fill="none" stroke="#000" stroke-width="7.5" stroke-linejoin="round"/>
<polyline points="624,172.8 624,346 685,410" fill="none" stroke="#3a3ad4" stroke-width="5" stroke-linejoin="round"/>
<polyline points="640,362.8 685,410" fill="none" stroke="#2a2aa8" stroke-width="5" stroke-linejoin="round" opacity="0.7"/>
<circle cx="624.2" cy="173.1" r="12.8" fill="#000"/><circle cx="624.2" cy="173.1" r="10" fill="#fb3ce6"/>
<circle cx="684.8" cy="410.8" r="12.8" fill="#000"/><circle cx="684.8" cy="410.8" r="10" fill="#fb3ce6"/>
<path d="M608 172.9 H615.5" stroke="#fa3333" stroke-width="4.8"/><path d="M690.5 416.8 L695.5 422" stroke="#fa3333" stroke-width="4.8"/>
<rect x="488" y="221.2" width="33.5" height="11.2" rx="3" fill="#fbf0f0"/>
<rect x="558.6" y="457.8" width="13.4" height="16.2" fill="#fbf0f0"/>
<rect x="670" y="518.5" width="25.5" height="8" rx="3" fill="#fbf0f0"/>
</svg></div>
<div class="b" style="left:919px;top:141px;width:41px;height:462.5px;background:#f0f0f0;"></div>
<svg style="left:919px;top:141px" width="41" height="463" viewBox="919 141 41 463"><line x1="921" y1="144.4" x2="957" y2="144.4" stroke="#b8b8b8" stroke-width="1" stroke-dasharray="1 1.2"/><rect x="958.3" y="141" width="1.7" height="463" fill="#dcdcdc"/><path d="M934.6 152.2 L934.6 171.5 L939.3 166.8 L943.6 174.5 L946.6 172.8 L942.4 165.3 L949.2 164.2 Z" fill="#3a3a3a"/><path d="M929.2 191.2 H944.5" stroke="#3a3a3a" stroke-width="1.6"/><path d="M943.6 186.39999999999998 L950.3 191.2 L943.6 196.0 Z" fill="#3a3a3a"/><circle cx="932.8" cy="205" r="4.4" fill="#fafafa" stroke="#333c44" stroke-width="1.4"/><circle cx="946" cy="205" r="4.4" fill="#cde6f5" stroke="#333c44" stroke-width="1.4"/><path d="M929.2 225.9 H944.5" stroke="#3a3a3a" stroke-width="1.6"/><path d="M943.6 221.1 L950.3 225.9 L943.6 230.70000000000002 Z" fill="#3a3a3a"/><circle cx="932.8" cy="239.2" r="4.4" fill="#cde6f5" stroke="#333c44" stroke-width="1.4"/><circle cx="946" cy="239.2" r="4.4" fill="#cde6f5" stroke="#333c44" stroke-width="1.4"/><path d="M932.8 257.1 V272.4" stroke="#3a3a3a" stroke-width="1.6"/><path d="M927.7 271.9 L937.9 271.9 L932.8 277.4 Z" fill="#3a3a3a"/><circle cx="946.5" cy="260.7" r="4.4" fill="#fafafa" stroke="#333c44" stroke-width="1.4"/><circle cx="946.5" cy="273.5" r="4.4" fill="#cde6f5" stroke="#333c44" stroke-width="1.4"/><path d="M932.8 292.3 V307" stroke="#3a3a3a" stroke-width="1.6"/><path d="M927.7 306.5 L937.9 306.5 L932.8 312 Z" fill="#3a3a3a"/><circle cx="946.5" cy="295.4" r="4.4" fill="#cde6f5" stroke="#333c44" stroke-width="1.4"/><circle cx="946.5" cy="308.7" r="4.4" fill="#cde6f5" stroke="#333c44" stroke-width="1.4"/><path d="M938.2 328.5 L927.8 346 H938.2 Z" fill="#fafafa" stroke="#3a3a3a" stroke-width="1.5" stroke-linejoin="round"/><path d="M941.9 328 L951.4 346.3 H941.9 Z" fill="#3a3a3a"/><path d="M929.2 361.2 L947.2 370.2 H929.2 Z" fill="#fafafa" stroke="#3a3a3a" stroke-width="1.5" stroke-linejoin="round"/><path d="M928.8 374.7 H947.7 L928.8 384.2 Z" fill="#3a3a3a"/><path d="M936.5 396.4 A10 10 0 1 1 934 414.5" fill="none" stroke="#555" stroke-width="1.8"/><path d="M934 414.5 A10 10 0 0 1 933.5 398" fill="none" stroke="#9ab" stroke-width="1.4" stroke-dasharray="1.5 1.5"/><path d="M932 393.5 L938.5 395.5 L934 400.5 Z" fill="#555"/><path d="M928.7 431.1 L936.3000000000001 436.0 L928.7 440.90000000000003 Z" fill="#3a3a3a"/><path d="M928.7 445 L936.3000000000001 449.9 L928.7 454.8 Z" fill="#3a3a3a"/><path d="M942.2 431.1 L949.8000000000001 436.0 L942.2 440.90000000000003 Z" fill="#3a3a3a"/><path d="M942.2 445 L949.8000000000001 449.9 L942.2 454.8 Z" fill="#3a3a3a"/><path d="M928.7 469.6 H943" stroke="#3a3a3a" stroke-width="1.6"/><path d="M942 464.3 L950.3 469.6 L942 474.8 Z" fill="#3a3a3a"/><path d="M933 478 L938 483 L933 488 L928 483 Z" fill="#3a3a3a"/><rect x="942.2" y="478.3" width="9.3" height="8.9" fill="#3a3a3a"/><rect x="927.3" y="500" width="23.8" height="23" fill="#d6eef2" stroke="#333" stroke-width="1.3" stroke-dasharray="1.6 1.6"/><path d="M929.5 502.5 L935.5 508.3 M949 502.5 L942.8 508.3 M929.5 521 L935.5 515.3 M949 521 L942.8 515.3" stroke="#4aa8b0" stroke-width="1.6"/><rect x="936" y="508.8" width="5.8" height="6.2" fill="#1e1e1e"/><circle cx="939.6" cy="545.6" r="11.4" fill="#f6f6f6" stroke="#5e5e5e" stroke-width="1.9"/><path d="M941.5 537.5 L935.5 546.5 H939.5 L937.5 553.5 L944 544.3 H940 Z" fill="#f5a05a" stroke="#c86a2a" stroke-width="0.8" stroke-linejoin="round"/><path d="M927.5 569.5 L941 584 M951 569.5 L937.5 584" stroke="#9a96d8" stroke-width="4.2" stroke-linecap="butt"/><path d="M937.5 580 L928 591.5 M941 580 L950.5 591.5" stroke="#777" stroke-width="3.4"/><path d="M937.5 580 L928 591.5 M941 580 L950.5 591.5" stroke="#eee" stroke-width="1.2"/></svg>
<div class="b" style="left:40px;top:141px;width:248px;height:462.5px;background:#f0f0f0;"></div>
<div class="b" style="left:41px;top:141px;width:245px;height:10px;background:linear-gradient(to right,#c9d6e6 0%,#c6d3e4 80%,#e6ecf4 100%);"></div>
<div class="t" style="left:44px;top:142.1px;font-size:7px;color:#333;font-weight:400;">Layers</div>
<div class="b" style="left:285px;top:152px;width:1.1999999999999886px;height:449px;background:#a0a0a0;"></div>
<div class="b" style="left:286.2px;top:141px;width:2.3000000000000114px;height:462.5px;background:#e6e6e6;"></div>
<div class="b" style="left:47.5px;top:173.8px;width:232.5px;height:417.7px;background:#fff;border:1px solid #b0b0b0;"></div>
<svg style="left:279.3px;top:144.3px" width="5" height="5"><path d="M0.7 0.7 L4.3 4.3 M4.3 0.7 L0.7 4.3" stroke="#222" stroke-width="1.1"/></svg>
<svg style="left:40px;top:150px" width="120" height="25" viewBox="40 150 120 25"><rect x="48.8" y="156.6" width="14.2" height="14.8" rx="2" fill="#dbe8f3" stroke="#8fb0cc" stroke-width="1.1"/><path d="M52.3 159.5 V168.5 M59.5 159.5 V168.5" stroke="#1f4a4a" stroke-width="2.2"/><path d="M52.5 164 H58" stroke="#111" stroke-width="1"/><path d="M59.5 159.5 V168.5" stroke="#5a8a7a" stroke-width="1"/><path d="M68.3 159 V169 M76.5 159 V169" stroke="#2a4a3a" stroke-width="2.4"/><path d="M69 162 H73.5 M69 166 H73.5" stroke="#111" stroke-width="1.2"/><path d="M76.5 159 V169" stroke="#a89050" stroke-width="0.9"/><rect x="83" y="157" width="12" height="13" fill="#fff"/><rect x="98.3" y="157" width="13" height="13" fill="#fff"/><path d="M86.8 161 H90.4 V163.3 H92.3 L88.6 167.3 L84.9 163.3 H86.8 Z" fill="#1f5f5f"/><path d="M102.8 167 H106.4 V164.7 H108.3 L104.6 160.7 L100.9 164.7 H102.8 Z" fill="#1f5f5f"/><rect x="115" y="157.2" width="12.5" height="2.1" fill="#7a2a6a"/><rect x="115" y="159.3" width="12.5" height="2.1" fill="#d0103a"/><rect x="115" y="161.4" width="12.5" height="2.1" fill="#5a2a7a"/><rect x="115" y="163.5" width="12.5" height="2.1" fill="#d0103a"/><rect x="115" y="165.6" width="12.5" height="2.1" fill="#6a1a5a"/><rect x="115" y="167.7" width="12.5" height="2.1" fill="#c01030"/><rect x="132.2" y="157" width="19.7" height="14" fill="#fff"/></svg>
<div class="t" style="left:135px;top:159.7px;font-size:7.6px;color:#333;font-weight:400;font-style:italic;">Font</div>
<div class="t" style="left:59px;top:176.6px;font-size:9px;color:#2a2a2a;font-weight:400;">1</div>
<div class="b" style="left:75.3px;top:176.4px;width:22.6px;height:12px;background:#00ff00;"></div>
<div class="t" style="left:99.2px;top:176.9px;font-size:9px;color:#333;font-weight:400;">BoardOutline BOL</div>
<div class="t" style="left:59px;top:190.1px;font-size:9px;color:#2a2a2a;font-weight:400;">2</div>
<div class="b" style="left:75.3px;top:189.9px;width:22.6px;height:12px;background:#c0c0c0;"></div>
<div class="t" style="left:99.2px;top:190.4px;font-size:9px;color:#333;font-weight:400;">TopSolderPaste SPU</div>
<div class="t" style="left:58px;top:203.5px;font-size:9px;color:#2a2a2a;font-weight:400;">3+</div>
<div class="b" style="left:75.3px;top:203.3px;width:22.6px;height:12px;background:#ffff00;"></div>
<div class="t" style="left:99.2px;top:203.8px;font-size:9px;color:#333;font-weight:400;">TopSilkScreen SKU</div>
<div class="t" style="left:58px;top:217.0px;font-size:9px;color:#2a2a2a;font-weight:400;">4+</div>
<div class="b" style="left:75.3px;top:216.8px;width:22.6px;height:12px;background:#008000;"></div>
<div class="t" style="left:99.2px;top:217.3px;font-size:9px;color:#333;font-weight:400;">TopSolderMask MSU</div>
<div class="t" style="left:58px;top:230.5px;font-size:9px;color:#2a2a2a;font-weight:400;">5+</div>
<div class="b" style="left:75.3px;top:230.3px;width:22.6px;height:12px;background:#ff0000;"></div>
<div class="t" style="left:99.2px;top:230.8px;font-size:9px;color:#333;font-weight:400;">TopCopper CPU</div>
<div class="t" style="left:58px;top:243.9px;font-size:9px;color:#2a2a2a;font-weight:400;">6+</div>
<div class="b" style="left:75.3px;top:243.8px;width:22.6px;height:12px;background:repeating-conic-gradient(#8c8c8c 0 25%, #fafafa 0 50%) 0 0/4.4px 4.4px;"></div>
<div class="t" style="left:99.2px;top:244.2px;font-size:9px;color:#333;font-weight:400;">2</div>
<div class="t" style="left:58px;top:257.4px;font-size:9px;color:#2a2a2a;font-weight:400;">7+</div>
<div class="b" style="left:75.3px;top:257.2px;width:22.6px;height:12px;background:repeating-conic-gradient(#8c8c8c 0 25%, #fafafa 0 50%) 0 0/4.4px 4.4px;"></div>
<div class="t" style="left:99.2px;top:257.7px;font-size:9px;color:#333;font-weight:400;">3</div>
<div class="t" style="left:58px;top:270.9px;font-size:9px;color:#2a2a2a;font-weight:400;">8+</div>
<div class="b" style="left:75.3px;top:270.7px;width:22.6px;height:12px;background:#000080;"></div>
<div class="t" style="left:99.2px;top:271.2px;font-size:9px;color:#333;font-weight:400;">BottomCopper CPL</div>
<div class="t" style="left:59px;top:284.4px;font-size:9px;color:#2a2a2a;font-weight:400;">9</div>
<div class="b" style="left:75.3px;top:284.2px;width:22.6px;height:12px;background:#008000;"></div>
<div class="t" style="left:99.2px;top:284.7px;font-size:9px;color:#333;font-weight:400;">BottomSolderMask MSL</div>
<div class="t" style="left:55.5px;top:297.8px;font-size:9px;color:#2a2a2a;font-weight:400;">10</div>
<div class="b" style="left:75.3px;top:297.6px;width:22.6px;height:12px;background:#4040ff;"></div>
<div class="t" style="left:99.2px;top:298.1px;font-size:9px;color:#333;font-weight:400;">PlatedDrills PTH</div>
<div class="t" style="left:55.5px;top:311.3px;font-size:9px;color:#2a2a2a;font-weight:400;">11</div>
<div class="b" style="left:75.3px;top:311.1px;width:22.6px;height:12px;background:#008080;"></div>
<div class="t" style="left:99.2px;top:311.6px;font-size:9px;color:#333;font-weight:400;">NonPlatedDrills NTH</div>
<div class="t" style="left:55.5px;top:324.8px;font-size:9px;color:#2a2a2a;font-weight:400;">12</div>
<div class="b" style="left:75.3px;top:324.9px;width:22.6px;height:12.6px;background:#fff;border:2px solid #8fbf8f;border-radius:2px;"></div>
<div class="t" style="left:55.5px;top:338.2px;font-size:9px;color:#2a2a2a;font-weight:400;">13</div>
<div class="b" style="left:75.3px;top:338.3px;width:22.6px;height:12.6px;background:#fff;border:2px solid #c89a9a;border-radius:2px;"></div>
<div class="t" style="left:55.5px;top:351.7px;font-size:9px;color:#2a2a2a;font-weight:400;">14</div>
<div class="b" style="left:75.3px;top:351.8px;width:22.6px;height:12.6px;background:#fff;border:2px solid #8a8ad0;border-radius:2px;"></div>
<div class="t" style="left:55.5px;top:365.2px;font-size:9px;color:#2a2a2a;font-weight:400;">15</div>
<div class="b" style="left:75.3px;top:365.3px;width:22.6px;height:12.6px;background:#fff;border:2px solid #e4e4ec;border-radius:2px;"></div>
<div class="t" style="left:55.5px;top:378.7px;font-size:9px;color:#2a2a2a;font-weight:400;">16</div>
<div class="b" style="left:75.3px;top:378.8px;width:22.6px;height:12.6px;background:#fff;border:2px solid #f2f29a;border-radius:2px;"></div>
<div class="t" style="left:55.5px;top:392.1px;font-size:9px;color:#2a2a2a;font-weight:400;">17</div>
<div class="b" style="left:75.3px;top:392.2px;width:22.6px;height:12.6px;background:#fff;border:2px solid #9fe69f;border-radius:2px;"></div>
<div class="t" style="left:55.5px;top:405.6px;font-size:9px;color:#2a2a2a;font-weight:400;">18</div>
<div class="b" style="left:75.3px;top:405.7px;width:22.6px;height:12.6px;background:#fff;border:2px solid #ee9090;border-radius:2px;"></div>
<div class="t" style="left:55.5px;top:419.1px;font-size:9px;color:#2a2a2a;font-weight:400;">19</div>
<div class="b" style="left:75.3px;top:419.2px;width:22.6px;height:12.6px;background:#fff;border:2px solid #9a9aee;border-radius:2px;"></div>
<div class="t" style="left:55.5px;top:432.5px;font-size:9px;color:#2a2a2a;font-weight:400;">20</div>
<div class="b" style="left:75.3px;top:432.6px;width:22.6px;height:12.6px;background:#fff;border:2px solid #8fbf8f;border-radius:2px;"></div>
<div class="t" style="left:55.5px;top:446.0px;font-size:9px;color:#2a2a2a;font-weight:400;">21</div>
<div class="b" style="left:75.3px;top:446.1px;width:22.6px;height:12.6px;background:#fff;border:2px solid #c89a9a;border-radius:2px;"></div>
<div class="t" style="left:55.5px;top:459.5px;font-size:9px;color:#2a2a2a;font-weight:400;">22</div>
<div class="b" style="left:75.3px;top:459.6px;width:22.6px;height:12.6px;background:#fff;border:2px solid #8a8ad0;border-radius:2px;"></div>
<div class="t" style="left:55.5px;top:472.9px;font-size:9px;color:#2a2a2a;font-weight:400;">23</div>
<div class="b" style="left:75.3px;top:473.0px;width:22.6px;height:12.6px;background:#fff;border:2px solid #e4e4ec;border-radius:2px;"></div>
<div class="t" style="left:55.5px;top:486.4px;font-size:9px;color:#2a2a2a;font-weight:400;">24</div>
<div class="b" style="left:75.3px;top:486.5px;width:22.6px;height:12.6px;background:#fff;border:2px solid #f2f29a;border-radius:2px;"></div>
<div class="t" style="left:55.5px;top:499.9px;font-size:9px;color:#2a2a2a;font-weight:400;">25</div>
<div class="b" style="left:75.3px;top:500.0px;width:22.6px;height:12.6px;background:#fff;border:2px solid #9fe69f;border-radius:2px;"></div>
<div class="t" style="left:55.5px;top:513.4px;font-size:9px;color:#2a2a2a;font-weight:400;">26</div>
<div class="b" style="left:75.3px;top:513.4px;width:22.6px;height:12.6px;background:#fff;border:2px solid #ee9090;border-radius:2px;"></div>
<div class="t" style="left:55.5px;top:526.8px;font-size:9px;color:#2a2a2a;font-weight:400;">27</div>
<div class="b" style="left:75.3px;top:526.9px;width:22.6px;height:12.6px;background:#fff;border:2px solid #9a9aee;border-radius:2px;"></div>
<div class="t" style="left:55.5px;top:540.3px;font-size:9px;color:#2a2a2a;font-weight:400;">28</div>
<div class="b" style="left:75.3px;top:540.4px;width:22.6px;height:12.6px;background:#fff;border:2px solid #8fbf8f;border-radius:2px;"></div>
<div class="t" style="left:55.5px;top:553.8px;font-size:9px;color:#2a2a2a;font-weight:400;">29</div>
<div class="b" style="left:75.3px;top:553.9px;width:22.6px;height:12.6px;background:#fff;border:2px solid #c89a9a;border-radius:2px;"></div>
<div class="t" style="left:55.5px;top:567.2px;font-size:9px;color:#2a2a2a;font-weight:400;">30</div>
<div class="b" style="left:75.3px;top:567.3px;width:22.6px;height:12.6px;background:#fff;border:2px solid #8a8ad0;border-radius:2px;"></div>
<div class="t" style="left:55.5px;top:580.7px;font-size:9px;color:#2a2a2a;font-weight:400;">31</div>
<div class="b" style="left:75.3px;top:580.8px;width:22.6px;height:12.6px;background:#fff;border:2px solid #e4e4ec;border-radius:2px;"></div>
<div class="b" style="left:48.8px;top:243.6px;width:219.5px;height:13px;border:1px solid #d98a8a;"></div>
<div class="b" style="left:273.2px;top:185.5px;width:2px;height:47px;background:#9a9a9a;border-radius:1px;"></div>
<div class="b" style="left:40px;top:603.5px;width:920px;height:20.0px;background:#f0f0f0;"></div>
<div class="b" style="left:40px;top:623.5px;width:920px;height:1.0px;background:#dcdcdc;"></div>
<div class="b" style="left:40px;top:624.5px;width:920px;height:13.5px;background:#f0f0f0;"></div>
<div class="b" style="left:40px;top:601px;width:248px;height:1px;background:#c8c8c8;"></div>
<div class="b" style="left:40px;top:603.5px;width:920px;height:1px;background:#d8d8d8;"></div>
<div class="b" style="left:45.4px;top:609px;width:33px;height:12px;background:#fff;"></div>
<div class="t" style="left:47.2px;top:611.2px;font-size:7px;color:#444;font-weight:400;letter-spacing:-0.4px;">mm</div>
<svg style="left:71px;top:613px" width="8" height="5"><path d="M1 1 L3.8 3.8 L6.6 1" fill="none" stroke="#888" stroke-width="0.9"/></svg>
<div class="b" style="left:83.8px;top:608.5px;width:9.6px;height:12.5px;background:#fafafa;"></div>
<svg style="left:84.5px;top:611px" width="8" height="8"><path d="M1 1 L7 7 M7 1 L1 7" stroke="#777" stroke-width="0.9"/></svg>
<div class="b" style="left:95px;top:608.5px;width:44px;height:12.5px;background:#fff;border-bottom:1px solid #ddd;"></div>
<div class="t" style="left:98.8px;top:610.6px;font-size:7.7px;color:#333;font-weight:400;letter-spacing:-0.25px;">47.50889</div>
<div class="b" style="left:141.5px;top:608.5px;width:10.5px;height:12.5px;background:#fafafa;"></div>
<div class="t" style="left:143.5px;top:610.7px;font-size:7.5px;color:#666;font-weight:400;">Y:</div>
<div class="b" style="left:153.5px;top:608.5px;width:42px;height:12.5px;background:#fff;border-bottom:1px solid #ddd;"></div>
<div class="t" style="left:156.7px;top:610.6px;font-size:7.7px;color:#333;font-weight:400;letter-spacing:-0.25px;">19.82803</div>
<div class="t" style="left:243px;top:610.6px;font-size:7.7px;color:#333;font-weight:400;letter-spacing:-0.4px;">Zoom:</div>
<div class="b" style="left:262.5px;top:608.5px;width:29px;height:12.5px;background:#fff;"></div>
<div class="t" style="left:264.7px;top:610.6px;font-size:7.7px;color:#333;font-weight:400;letter-spacing:-0.25px;">8.9853</div>
<div class="b" style="left:293.5px;top:605px;width:1.2px;height:17px;background:#c0c0c0;"></div>
<div class="b" style="left:816.8px;top:605px;width:143.2px;height:18px;background:#fff;border-left:1.3px solid #c8c8c8;"></div>
<div class="b" style="left:670px;top:608px;width:31px;height:13px;background:#fff;"></div>
<div class="t" style="left:684px;top:610.5px;font-size:7.5px;color:#333;font-weight:400;">1</div>
<svg style="left:190px;top:603px" width="630" height="22" viewBox="190 603 630 22"><path d="M199 620 L209.5 620 L208 610.5 Z M199 620 L208.5 611" fill="none" stroke="#333" stroke-width="1.1"/><circle cx="209" cy="610" r="1" fill="#333"/><circle cx="218.3" cy="614.5" r="4.5" fill="none" stroke="#333" stroke-width="1.2"/><path d="M212.5 614.5 H224 M218.3 608.7 V620.3" stroke="#333" stroke-width="1"/><path d="M234.5 609.5 L238.5 613.5 L235 617 L231 613 Z" fill="#2a2a2a"/><path d="M232 616 L229.5 619.5" stroke="#888" stroke-width="1"/><circle cx="303.5" cy="612.8" r="3.6" fill="#30d0d0" stroke="#2aa" stroke-width="1"/><path d="M306.0 615.3 L309.5 619.5" stroke="#222" stroke-width="1.8"/><rect x="316" y="614" width="9" height="7" fill="#f07878"/><circle cx="318.5" cy="612.8" r="3.6" fill="#8a50e0" stroke="#2aa" stroke-width="1"/><path d="M321.0 615.3 L324.5 619.5" stroke="#222" stroke-width="1.8"/><rect x="330" y="614" width="8" height="7" fill="#aab" opacity="0.6"/><circle cx="333" cy="612.8" r="3.6" fill="#30c0d8" stroke="#2aa" stroke-width="1"/><path d="M335.5 615.3 L339 619.5" stroke="#222" stroke-width="1.8"/><rect x="346" y="609" width="11" height="12" fill="#f28a8a"/><rect x="347" y="615" width="3" height="5" fill="#555"/><rect x="353" y="615" width="3" height="5" fill="#555"/><rect x="349" y="613" width="5" height="3" fill="#fff" opacity=".7"/><rect x="360" y="609" width="11" height="12" fill="#f5a0a0"/><path d="M360 615 H371" stroke="#c66" stroke-width="1"/><rect x="376.6" y="609" width="11.5" height="12" fill="#f7b4b4"/><path d="M379 615 H386.5" stroke="#111" stroke-width="2.2"/><path d="M382 611.5 L378 615 L382 618.5 Z" fill="#111"/><rect x="390.6" y="609" width="11.5" height="12" fill="#f7b4b4"/><path d="M391.5 615 H399" stroke="#111" stroke-width="2.2"/><path d="M397 611.5 L401 615 L397 618.5 Z" fill="#111"/><rect x="404.6" y="609" width="11.5" height="12" fill="#f7b4b4"/><path d="M410.3 610 V617" stroke="#111" stroke-width="2.2"/><path d="M406.8 615.5 L410.3 620 L413.8 615.5 Z" fill="#111"/><rect x="418.6" y="609" width="11.5" height="12" fill="#f7b4b4"/><path d="M424.3 613 V620" stroke="#111" stroke-width="2.2"/><path d="M420.8 614.5 L424.3 610 L427.8 614.5 Z" fill="#111"/><rect x="436" y="609" width="10" height="10" fill="#f28080"/><rect x="434" y="616" width="5" height="5" fill="#333"/><rect x="448" y="609" width="12" height="12" fill="#f29090"/><path d="M449 614 H459 M449 618 H459" stroke="#222" stroke-width="1.6"/><rect x="461" y="609" width="12" height="12" fill="#f29090"/><path d="M462 610 L472 620 M462 620 L472 610" stroke="#222" stroke-width="1.6"/><path d="M478 620 L488 610" stroke="#444" stroke-width="1.3"/><rect x="479" y="611" width="7" height="7" fill="none" stroke="#aaa" stroke-width="0.8"/><rect x="492" y="609.5" width="10" height="10" fill="#f4c0c0" stroke="#d88" stroke-width="0.8"/><path d="M494 612 L500 618 M500 612 L494 618" stroke="#c55" stroke-width="0.9"/><rect x="504.3" y="605.5" width="1.4" height="17" fill="#999"/><rect x="509.7" y="608.6" width="12" height="12.5" rx="2" fill="#e4f3fb" stroke="#7aa0c0" stroke-width="1.2"/><path d="M512.7 614.0 L517.7 610.5" stroke="#246" stroke-width="1.4"/><circle cx="512.5" cy="618" r="1.3" fill="#d33"/><circle cx="516.5" cy="619" r="1.3" fill="#d33"/><circle cx="519.5" cy="619" r="1.3" fill="#d33"/><rect x="524" y="608.6" width="12" height="12.5" rx="2" fill="#e4f3fb" stroke="#7aa0c0" stroke-width="1.2"/><path d="M527 614 L532 610.5" stroke="#246" stroke-width="1.4"/><rect x="526" y="616.5" width="8" height="3" fill="#e66"/><rect x="539" y="608.6" width="12" height="12.5" rx="2" fill="#e4f3fb" stroke="#7aa0c0" stroke-width="1.2"/><path d="M542 614 L547 610.5" stroke="#246" stroke-width="1.4"/><path d="M538.5 616 L544 621 L538.5 621 Z M551.5 616 L546 621 L551.5 621 Z" fill="#f00"/><rect x="538" y="616" width="14" height="5" fill="#f22"/><rect x="553.5" y="608.6" width="12" height="12.5" rx="2" fill="#e4f3fb" stroke="#7aa0c0" stroke-width="1.2"/><path d="M556.5 614.0 L561.5 610.5" stroke="#246" stroke-width="1.4"/><rect x="556" y="617" width="6" height="3" fill="#e77"/><rect x="568.5" y="608.6" width="12" height="12.5" rx="2" fill="#e4f3fb" stroke="#7aa0c0" stroke-width="1.2"/><path d="M571.5 614.0 L576.5 610.5" stroke="#246" stroke-width="1.4"/><rect x="571" y="616.5" width="7" height="3.5" fill="#f0a050"/><circle cx="596" cy="612.5" r="3.4" fill="#20d020"/><rect x="594" y="616" width="4" height="4" fill="#e33"/><rect x="604.3" y="608.5" width="12.5" height="12.5" rx="2" fill="#eceaf8" stroke="#8f8cd0" stroke-width="1.2"/><path d="M607.5 611 Q610.5 616 607.5 619 M613.5 611 Q610.5 616 613.5 619" fill="none" stroke="#c9a" stroke-width="1"/><circle cx="625.5" cy="613" r="3.5" fill="none" stroke="#e77" stroke-width="1.2"/><path d="M625.5 616.5 V621" stroke="#e77" stroke-width="1.2"/><rect x="646.3" y="609.5" width="11" height="11" fill="#fff" stroke="#5a5a6a" stroke-width="1.5"/><path d="M646.5 615 H657 M651.8 609.5 V620.5" stroke="#5a5a6a" stroke-width="1.4"/><path d="M707 610.5 H716.5" stroke="#444" stroke-width="1.3" stroke-dasharray="1.3 1"/><path d="M707 613.1 H716.5" stroke="#444" stroke-width="1.3" stroke-dasharray="1.3 1"/><path d="M707 615.7 H716.5" stroke="#444" stroke-width="1.3" stroke-dasharray="1.3 1"/><path d="M707 618.3 H716.5" stroke="#444" stroke-width="1.3" stroke-dasharray="1.3 1"/><rect x="721" y="608.5" width="12" height="13" rx="2" fill="#a8c8e8" stroke="#6a90b8" stroke-width="1.2"/><path d="M727 610 V619 M724 616 L727 619 L730 616" fill="none" stroke="#246" stroke-width="1"/><path d="M737 620 L747 610" stroke="#999" stroke-width="1" stroke-dasharray="2 1"/><path d="M738 611 V620" stroke="#aaa" stroke-width="0.8" stroke-dasharray="1 1"/><rect x="759" y="610" width="8" height="9" fill="#fdf3dc"/><circle cx="758.5" cy="610" r="1.3" fill="#722"/><circle cx="767.5" cy="610" r="1.3" fill="#722"/><circle cx="767.5" cy="619.5" r="1.3" fill="#722"/><circle cx="772" cy="610" r="1.3" fill="#722"/><circle cx="781" cy="610" r="1.3" fill="#722"/><circle cx="781" cy="619.5" r="1.3" fill="#722"/><path d="M777.5 611 L781 614.8 L777.5 618.5 L774 614.8 Z" fill="#f00"/><circle cx="786.5" cy="610" r="1.3" fill="#722"/><circle cx="795.5" cy="610" r="1.3" fill="#722"/><circle cx="795.5" cy="619.5" r="1.3" fill="#722"/><path d="M792 611 L795.5 614.8 L792 618.5 L788.5 614.8 Z" fill="#900"/><rect x="800.5" y="608.6" width="12.5" height="12.5" rx="2" fill="#d8f0f4" stroke="#6a90b0" stroke-width="1.2"/><path d="M806.8 611 L810.2 614.8 L806.8 618.6 L803.4 614.8 Z" fill="#900"/><circle cx="802" cy="610" r="1.2" fill="#222"/><circle cx="811.5" cy="610" r="1.2" fill="#222"/><circle cx="802" cy="619.5" r="1.2" fill="#222"/><circle cx="811.5" cy="619.5" r="1.2" fill="#222"/></svg>
<div class="t" style="left:42px;top:627.4px;font-size:7.6px;color:#333;font-weight:400;">Click to select (Shift adds, Ctrl removes)</div>
<div class="t" style="left:452px;top:627.7px;font-size:7.2px;color:#333;font-weight:400;">6) 2 (SIG) PP B2</div>
</div></div>
</body></html>
